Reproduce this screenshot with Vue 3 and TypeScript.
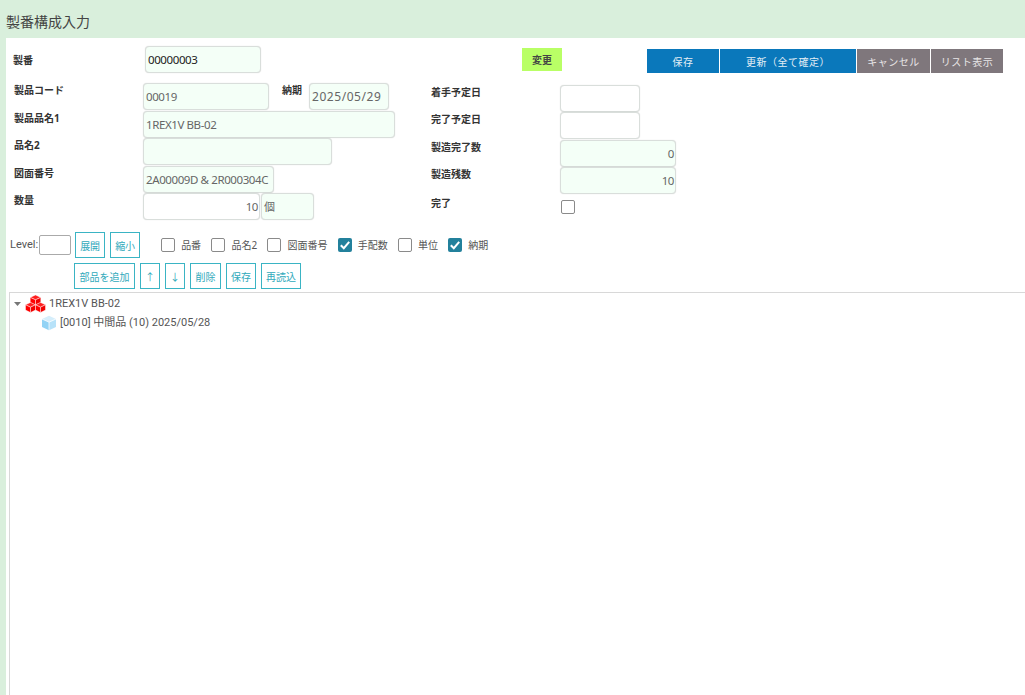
<script setup lang="ts">
interface Toggle { label: string; checked: boolean }
const toggles: Toggle[] = [
  { label: '品番', checked: false },
  { label: '品名2', checked: false },
  { label: '図面番号', checked: false },
  { label: '手配数', checked: true },
  { label: '単位', checked: false },
  { label: '納期', checked: true },
]
const actions: string[] = ['部品を追加', '↑', '↓', '削除', '保存', '再読込']
</script>

<template>
  <div class="page">
    <header class="title">製番構成入力</header>
    <main class="body">
      <div class="top">
        <span class="lbl top-lbl">製番</span>
        <div class="inp no-input">00000003</div>
        <button class="change">変更</button>
        <div class="cmds">
          <button class="cmd blue w72">保存</button>
          <button class="cmd blue w136">更新（全て確定）</button>
          <button class="cmd gray w73">キャンセル</button>
          <button class="cmd gray w72">リスト表示</button>
        </div>
      </div>
      <div class="fields">
        <div class="left">
          <div class="row">
            <span class="lbl l-lbl">製品コード</span>
            <div class="inp ro w126">00019</div>
            <span class="lbl due">納期</span>
            <div class="inp ro w80 date">2025/05/29</div>
          </div>
          <div class="row">
            <span class="lbl l-lbl">製品品名1</span>
            <div class="inp ro w252">1REX1V BB-02</div>
          </div>
          <div class="row">
            <span class="lbl l-lbl">品名2</span>
            <div class="inp ro w189"></div>
          </div>
          <div class="row">
            <span class="lbl l-lbl">図面番号</span>
            <div class="inp ro w131">2A00009D &amp; 2R000304C</div>
          </div>
          <div class="row">
            <span class="lbl l-lbl">数量</span>
            <div class="inp w117 num">10</div>
            <div class="inp ro w53 unit">個</div>
          </div>
        </div>
        <div class="right">
          <div class="row">
            <span class="lbl r-lbl">着手予定日</span>
            <div class="inp w80"></div>
          </div>
          <div class="row">
            <span class="lbl r-lbl">完了予定日</span>
            <div class="inp w80"></div>
          </div>
          <div class="row">
            <span class="lbl r-lbl">製造完了数</span>
            <div class="inp ro w116 num">0</div>
          </div>
          <div class="row">
            <span class="lbl r-lbl">製造残数</span>
            <div class="inp ro w116 num">10</div>
          </div>
          <div class="row">
            <span class="lbl r-lbl last">完了</span>
            <span class="box done"></span>
          </div>
        </div>
      </div>
      <div class="levelbar">
        <span class="level">Level:</span>
        <div class="levelinp"></div>
        <button class="tool">展開</button>
        <button class="tool">縮小</button>
        <div class="toggles">
          <label v-for="t in toggles" :key="t.label" class="toggle">
            <span class="box" :class="{ on: t.checked }">
              <svg v-if="t.checked" viewBox="0 0 14 14" width="14" height="14">
                <path d="M2.8 7.2 5.8 10.2 11.2 3.8" fill="none" stroke="#fff" stroke-width="2" />
              </svg>
            </span>
            <span class="tlabel">{{ t.label }}</span>
          </label>
        </div>
      </div>
      <div class="actions">
        <button v-for="a in actions" :key="a" class="tool">{{ a }}</button>
      </div>
      <section class="tree">
        <div class="node root">
          <svg class="caret" viewBox="0 0 7 4" width="7" height="4"><path d="M0 0H7L3.5 4Z" fill="#777" /></svg>
          <svg class="cubes" viewBox="0 0 21 18" width="21" height="18">
            <g stroke="#fff" stroke-width=".45" stroke-linejoin="round">
              <path d="M10.5 0 15.8 2.4 10.5 4.8 5.2 2.4Z" fill="#ff2020" />
              <path d="M5.2 2.4 10.5 4.8V10L5.2 7.6Z" fill="#ff0000" />
              <path d="M15.8 2.4 10.5 4.8V10L15.8 7.6Z" fill="#f00000" />
              <path d="M5.5 7.4 10.5 9.8 5.5 12.2.5 9.8Z" fill="#ff2020" />
              <path d="M.5 9.8 5.5 12.2V17.5L.5 15.1Z" fill="#ff0000" />
              <path d="M10.5 9.8 5.5 12.2V17.5L10.5 15.1Z" fill="#f00000" />
              <path d="M15.5 7.4 20.5 9.8 15.5 12.2 10.5 9.8Z" fill="#ff2020" />
              <path d="M10.5 9.8 15.5 12.2V17.5L10.5 15.1Z" fill="#ff0000" />
              <path d="M20.5 9.8 15.5 12.2V17.5L20.5 15.1Z" fill="#f00000" />
            </g>
          </svg>
          <span>1REX1V BB-02</span>
        </div>
        <div class="node child">
          <svg viewBox="0 0 16 16" width="16" height="16">
            <path d="M8 .8 15 4 8 7.2 1 4Z" fill="#d5eefb" />
            <path d="M1 4 8 7.2V15.2L1 12Z" fill="#92d3f5" />
            <path d="M15 4 8 7.2V15.2L15 12Z" fill="#b7e2f9" />
            <path d="M1 4 8 7.2 15 4M8 7.2V15.2" fill="none" stroke="#fff" stroke-width=".7" />
          </svg>
          <span>[0010] 中間品 (10) 2025/05/28</span>
        </div>
      </section>
    </main>
  </div>
</template>

<style>
html, body { margin: 0; background: #fff; }
</style>

<style scoped>
.page {
  width: 1025px;
  height: 695px;
  overflow: hidden;
  display: flex;
  flex-direction: column;
  background: #d9efdc;
  font-family: "Noto Sans", "Noto Sans CJK JP", sans-serif;
  color: #333;
}
.title {
  height: 38px;
  flex: none;
  padding: 10px 0 0 6px;
  box-sizing: border-box;
  font-size: 14px;
  line-height: 24px;
  color: #444;
}
.body {
  flex: 1;
  min-height: 0;
  margin-left: 6px;
  background: #fff;
  display: flex;
  flex-direction: column;
}
.lbl {
  font-size: 10px;
  font-weight: 700;
  line-height: 14px;
  color: #333;
}
.inp {
  box-sizing: border-box;
  height: 27px;
  border: 1px solid #d9dedb;
  border-radius: 4px;
  box-shadow: 0 0 1px rgba(0, 0, 0, .18);
  background: #fff;
  padding: 4px 2px 0;
  font-size: 11.5px;
  letter-spacing: -.4px;
  line-height: 18px;
  color: #666;
  white-space: nowrap;
  overflow: hidden;
  flex: none;
}
.ro { background: #f4fff7; }
.num { text-align: right; padding-right: 1px; }
.date { font-size: 12px; letter-spacing: .55px; }
.unit { font-size: 11px; letter-spacing: 0; }
.w80 { width: 80px; }
.w116 { width: 116px; }
.w117 { width: 117px; }
.w126 { width: 126px; }
.w131 { width: 131px; }
.w189 { width: 189px; }
.w252 { width: 252px; }
.w53 { width: 53px; margin-left: 1px; }
.top {
  height: 36px;
  box-sizing: border-box;
  padding-top: 8px;
  display: flex;
  align-items: flex-start;
}
.top-lbl { margin: 7px 0 0 7px; width: 132px; flex: none; }
.no-input {
  width: 116px;
  background: #f4fff7;
  color: #222;
}
.change {
  width: 40px;
  height: 23px;
  margin: 2px 0 0 261px;
  flex: none;
  border: 0;
  padding: 0;
  background: #b9ff66;
  font: 700 10px "Noto Sans", "Noto Sans CJK JP", sans-serif;
  color: #444;
}
.cmds {
  margin: 3px 0 0 85px;
  display: flex;
  gap: 1px;
}
.cmd {
  height: 24px;
  border: 0;
  padding: 0;
  font: 400 10px "Noto Sans", "Noto Sans CJK JP", sans-serif;
  letter-spacing: .5px;
  color: #fff;
}
.blue { background: #0a78bb; color: #e4eef5; }
.gray { background: #7f777c; color: #e8e6e7; }
.w72 { width: 72px; }
.w73 { width: 73px; }
.cmd.w136 { width: 136px; }
.fields {
  display: flex;
  align-items: flex-start;
  height: 157px;
  padding-top: 1px;
  box-sizing: border-box;
}
.left { width: 425px; flex: none; margin-top: 8px; }
.right { margin-top: 10px; }
.row {
  display: flex;
  align-items: flex-start;
  height: 27.5px;
}
.right .row { height: 27.3px; }
.l-lbl { width: 129px; flex: none; margin-left: 8px; }
.due { width: 27px; margin-left: 13px; flex: none; }
.r-lbl { width: 129px; flex: none; }
.r-lbl.last { margin-top: 2px; }
.box {
  box-sizing: border-box;
  width: 14px;
  height: 14px;
  border: 1px solid #8a8a8a;
  border-radius: 2px;
  background: #fff;
  display: inline-block;
  flex: none;
}
.box.on {
  border: 0;
  background: #23819c;
}
.box svg { display: block; }
.done { margin-top: 6px; margin-left: 1px; }
.levelbar {
  height: 27px;
  padding-top: 1px;
  box-sizing: border-box;
  display: flex;
  align-items: center;
}
.level {
  margin-left: 4px;
  font: 400 11px/14px Roboto, sans-serif;
  color: #555;
}
.levelinp {
  box-sizing: border-box;
  width: 32px;
  height: 20px;
  border: 1px solid #aaa;
  border-radius: 2px;
  margin-left: 1px;
}
.tool {
  box-sizing: border-box;
  height: 26px;
  border: 1px solid #3ab4c4;
  background: #fff;
  padding: 0 4px;
  font: 400 10px "Noto Sans", "Noto Sans CJK JP", sans-serif;
  color: #30a9bb;
  flex: none;
}
.levelbar .tool { width: 30px; margin-left: 4px; padding: 0; }
.levelbar .tool + .tool { margin-left: 5px; }
.toggles {
  display: flex;
  margin-left: 21px;
  gap: 10.3px;
}
.toggle {
  display: flex;
  align-items: center;
  gap: 6px;
}
.tlabel {
  font-size: 10px;
  line-height: 14px;
  color: #555;
}
.actions {
  height: 34px;
  padding: 5px 0 0 68px;
  display: flex;
  align-items: flex-start;
  gap: 5px;
  box-sizing: border-box;
}
.actions .tool { width: auto; min-width: 20px; }
.actions .tool:first-child { width: 61px; padding: 0; }
.actions .tool:nth-child(2),
.actions .tool:nth-child(3) { width: 20px; padding: 0; }
.actions .tool:nth-child(4) { width: 31px; padding: 0; }
.tree {
  flex: 1;
  margin-left: 3px;
  border-top: 1px solid #d8d8d8;
  border-left: 1px solid #d8d8d8;
  font: 400 11px/16px Roboto, "Noto Sans CJK JP", sans-serif;
  color: #555;
  padding-top: 1px;
}
.node {
  display: flex;
  align-items: center;
  height: 19px;
}
.caret { margin-left: 4px; }
.cubes { margin-left: 4px; margin-right: 3px; }
.child { padding-left: 31px; gap: 3px; }
</style>
